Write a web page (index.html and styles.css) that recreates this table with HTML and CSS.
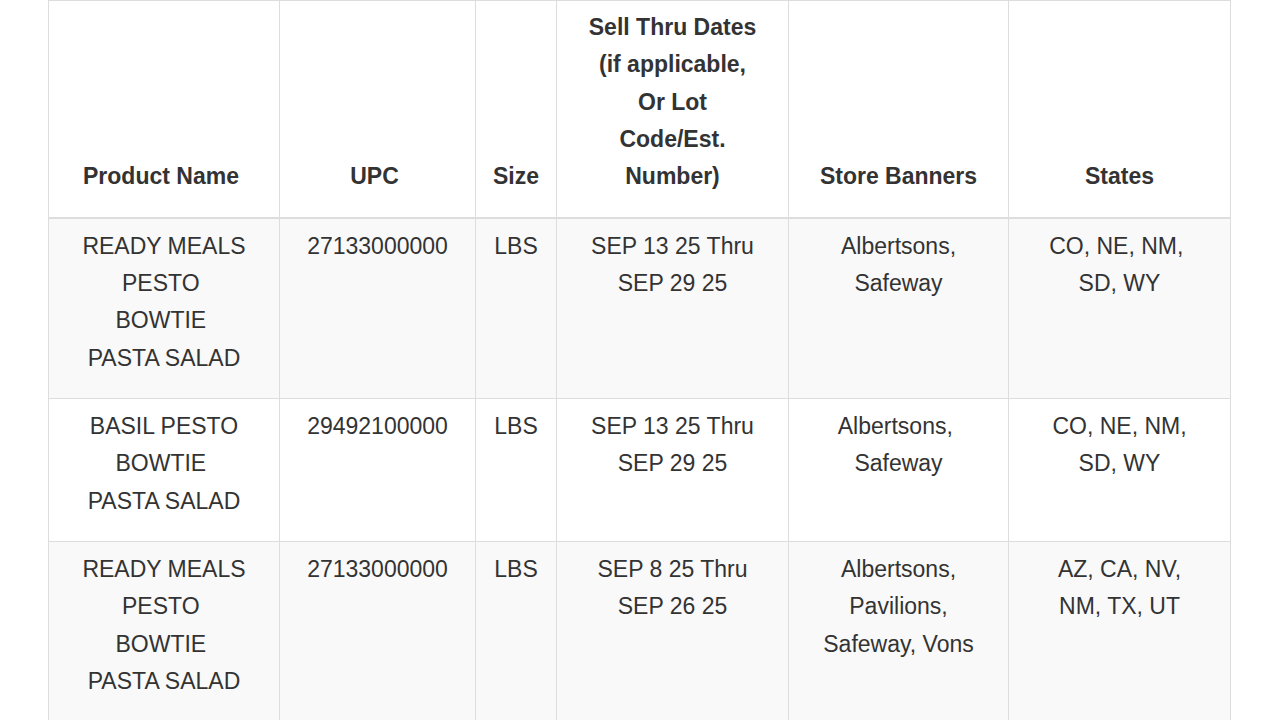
FILE: index.html
```html
<!DOCTYPE html>
<html lang="en">
<head>
    <meta charset="UTF-8">
    <meta name="viewport" content="width=device-width, initial-scale=1.0">
    <title>Recalled Products</title>
    <link rel="stylesheet" href="styles.css">
</head>
<body>

    <div class="table-wrap">
        <table class="recall-table">
            <colgroup>
                <col class="col-name">
                <col class="col-upc">
                <col class="col-size">
                <col class="col-dates">
                <col class="col-banners">
                <col class="col-states">
            </colgroup>
            <thead>
                <tr>
                    <th class="shifted">Product Name</th>
                    <th class="shifted">UPC</th>
                    <th>Size</th>
                    <th>Sell Thru Dates<br>(if applicable,<br>Or Lot<br>Code/Est.<br>Number)</th>
                    <th>Store Banners</th>
                    <th>States</th>
                </tr>
            </thead>
            <tbody>
                <tr>
                    <td>READY MEALS<br>PESTO&nbsp;<br>BOWTIE&nbsp;<br>PASTA SALAD</td>
                    <td>27133000000</td>
                    <td>LBS</td>
                    <td>SEP 13 25 Thru<br>SEP 29 25</td>
                    <td>Albertsons,<br>Safeway</td>
                    <td>CO, NE, NM,&nbsp;<br>SD, WY</td>
                </tr>
                <tr>
                    <td>BASIL PESTO<br>BOWTIE&nbsp;<br>PASTA SALAD</td>
                    <td>29492100000</td>
                    <td>LBS</td>
                    <td>SEP 13 25 Thru<br>SEP 29 25</td>
                    <td>Albertsons,&nbsp;<br>Safeway</td>
                    <td>CO, NE, NM,<br>SD, WY</td>
                </tr>
                <tr>
                    <td>READY MEALS<br>PESTO&nbsp;<br>BOWTIE&nbsp;<br>PASTA SALAD</td>
                    <td>27133000000</td>
                    <td>LBS</td>
                    <td>SEP 8 25 Thru<br>SEP 26 25</td>
                    <td>Albertsons,<br>Pavilions,<br>Safeway, Vons</td>
                    <td>AZ, CA, NV,<br>NM, TX, UT</td>
                </tr>
            </tbody>
        </table>
    </div>

</body>
</html>
```

FILE: styles.css
```css
body {
    margin: 0;
    background-color: #fff;
    color: #333;
    font-family: "Liberation Sans", Arial, sans-serif;
    font-size: 23px;
    line-height: 37.33px;
}
.table-wrap {
    padding-left: 48px;
}
.recall-table {
    border-collapse: collapse;
    table-layout: fixed;
    width: 1182px;
}
.col-name { width: 231px; }
.col-upc { width: 196px; }
.col-size { width: 81px; }
.col-dates { width: 232px; }
.col-banners { width: 220px; }
.col-states { width: 222px; }
.recall-table th,
.recall-table td {
    border: 1px solid #ddd;
    text-align: center;
}
.recall-table th {
    padding: 8px 8px 21px;
    vertical-align: bottom;
    font-weight: bold;
    border-bottom: 2px solid #ddd;
}
.recall-table th.shifted {
    padding-right: 14px;
    padding-left: 8px;
}
.recall-table td {
    padding: 9px 8px 21px;
    vertical-align: top;
}
.recall-table tbody tr:nth-child(odd) {
    background-color: #f9f9f9;
}
```
